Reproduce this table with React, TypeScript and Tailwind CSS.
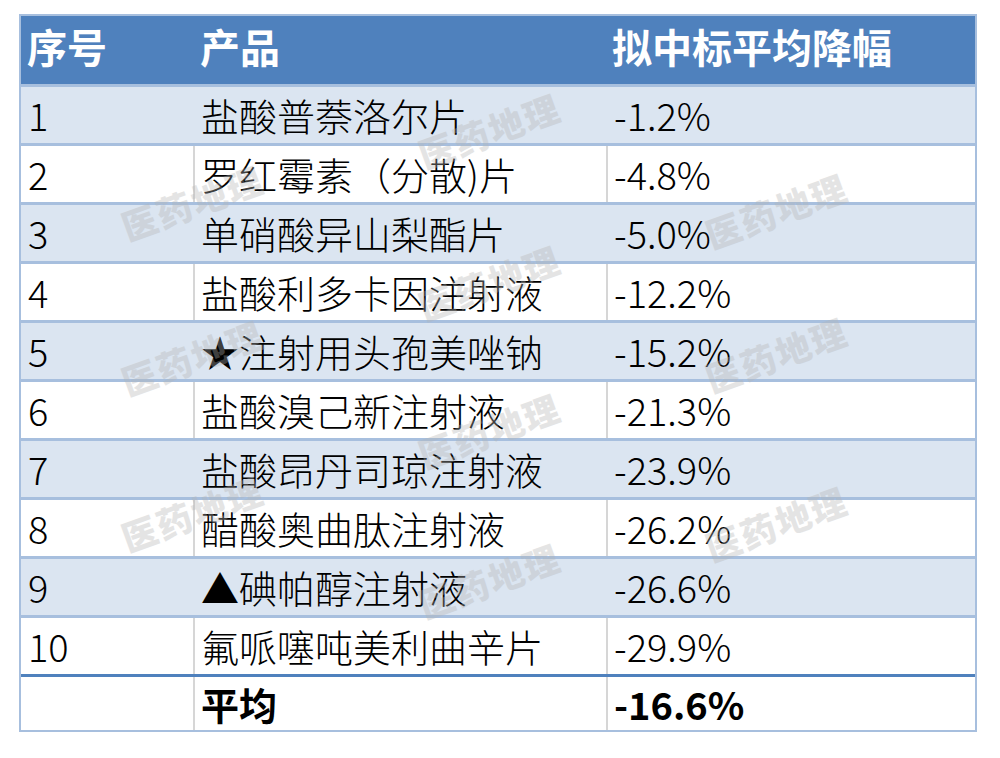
import React from "react";

const rows = [
  { no: "1", name: "盐酸普萘洛尔片", rate: "-1.2%" },
  { no: "2", name: "罗红霉素（分散)片", rate: "-4.8%" },
  { no: "3", name: "单硝酸异山梨酯片", rate: "-5.0%" },
  { no: "4", name: "盐酸利多卡因注射液", rate: "-12.2%" },
  { no: "5", name: "★注射用头孢美唑钠", rate: "-15.2%" },
  { no: "6", name: "盐酸溴己新注射液", rate: "-21.3%" },
  { no: "7", name: "盐酸昂丹司琼注射液", rate: "-23.9%" },
  { no: "8", name: "醋酸奥曲肽注射液", rate: "-26.2%" },
  { no: "9", name: "▲碘帕醇注射液", rate: "-26.6%" },
  { no: "10", name: "氟哌噻吨美利曲辛片", rate: "-29.9%" },
];

// watermark spots, relative to the table's top-left corner
const marks = [
  { left: 97, top: 168 },
  { left: 394, top: 96 },
  { left: 394, top: 248 },
  { left: 394, top: 396 },
  { left: 394, top: 546 },
  { left: 97, top: 323 },
  { left: 97, top: 479 },
  { left: 681, top: 176 },
  { left: 681, top: 320 },
  { left: 681, top: 489 },
];

const font = { fontFamily: '"Noto Sans CJK SC", "Noto Sans", sans-serif' };

export default function App() {
  return (
    <div className="min-h-[758px] w-[1000px] bg-white pl-[19px] pt-[14px]" style={font}>
      <div className="relative w-[958px] border-2 border-[#a7bfde]">
        {/* Header */}
        <div className="flex h-[68px] bg-[#4f81bd] pb-[8px] text-[40px] font-bold leading-none text-white">
          <div className="flex w-[172px] items-center px-[6px]">序号</div>
          <div className="flex w-[413px] items-center px-[7px]">产品</div>
          <div className="flex flex-1 items-center px-[6px]">拟中标平均降幅</div>
        </div>

        {/* Body */}
        {rows.map((r, i) => {
          const blue = i % 2 === 0;
          return (
            <div
              key={r.no}
              className={`flex h-[59px] border-t-[3px] border-[#a7bfde] text-[38px] font-light leading-none text-black ${
                blue ? "bg-[#dbe5f1]" : "bg-white"
              }`}
            >
              <div className="flex w-[172px] items-center px-[7px]">{r.no}</div>
              <div
                className={`flex w-[413px] items-center border-l-2 px-[6px] ${
                  blue ? "border-[#dbe5f1]" : "border-[#d6d6d6]"
                }`}
              >
                {r.name}
              </div>
              <div
                className={`flex flex-1 items-center border-l-2 px-[6px] ${
                  blue ? "border-[#dbe5f1]" : "border-[#d6d6d6]"
                }`}
              >
                {r.rate}
              </div>
            </div>
          );
        })}

        {/* Average */}
        <div className="flex h-[56px] border-t-[3px] border-[#4f81bd] bg-white text-[38px] font-bold leading-none text-black">
          <div className="w-[172px]"></div>
          <div className="flex w-[413px] items-center border-l-2 border-[#d6d6d6] px-[6px]">平均</div>
          <div className="flex flex-1 items-center border-l-2 border-[#d6d6d6] px-[6px]">-16.6%</div>
        </div>

        {/* Watermarks */}
        {marks.map((m, i) => (
          <div
            key={i}
            className="pointer-events-none absolute -rotate-[20deg] text-[35px] font-black leading-none tracking-[2px] text-[#b4b4b4] opacity-35"
            style={{ left: m.left, top: m.top }}
          >
            医药地理
          </div>
        ))}
      </div>
    </div>
  );
}
